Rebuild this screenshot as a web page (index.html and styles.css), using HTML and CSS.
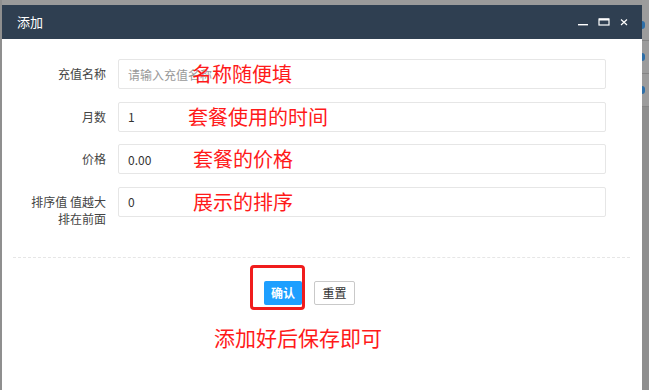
FILE: index.html
```html
<!DOCTYPE html>
<html>
<head>
  <meta charset="utf-8">
  <title>添加</title>
  <link rel="stylesheet" href="styles.css">
</head>
<body>
  <div class="page">
    <div class="side-left"></div>

    <!-- dialog -->
    <div class="layer">
      <div class="layer-title">
        <span class="title-text">添加</span>
        <div class="layer-btns">
          <svg class="ico-min" width="10" height="12" viewBox="0 0 10 12"><rect x="0" y="8" width="10" height="1.4" fill="#fff"/></svg>
          <svg class="ico-max" width="12" height="12" viewBox="0 0 12 12"><rect x="1" y="3" width="10" height="6" fill="none" stroke="#fff" stroke-width="1.2"/><rect x="1" y="2.5" width="10" height="2" fill="#fff"/></svg>
          <svg class="ico-close" width="8" height="12" viewBox="0 0 8 12"><path d="M1 3.5 L7 9 M7 3.5 L1 9" stroke="#fff" stroke-width="1.2"/></svg>
        </div>
      </div>

      <div class="layer-body">
        <form class="form">
          <div class="form-item">
            <label class="form-label">充值名称</label>
            <div class="input-block">
              <input class="input" placeholder="请输入充值名称">
              <span class="note note-1">名称随便填</span>
            </div>
          </div>
          <div class="form-item">
            <label class="form-label">月数</label>
            <div class="input-block">
              <input class="input" value="1">
              <span class="note note-2">套餐使用的时间</span>
            </div>
          </div>
          <div class="form-item">
            <label class="form-label">价格</label>
            <div class="input-block">
              <input class="input" value="0.00">
              <span class="note note-3">套餐的价格</span>
            </div>
          </div>
          <div class="form-item">
            <label class="form-label">排序值 值越大<br>排在前面</label>
            <div class="input-block">
              <input class="input" value="0">
              <span class="note note-3">展示的排序</span>
            </div>
          </div>
        </form>

        <div class="dash"></div>

        <div class="btn-row">
          <div class="btn-wrap">
            <button class="btn btn-blue" type="button">确认</button>
            <span class="mark"></span>
          </div>
          <button class="btn btn-plain" type="button">重置</button>
        </div>

        <p class="tip">添加好后保存即可</p>
      </div>
    </div>

    <!-- bits of the page behind the shade -->
    <div class="side-right">
      <div class="peek"><span class="dot"></span></div>
      <div class="peek"><span class="dot"></span></div>
      <div class="peek"><span class="dot"></span></div>
    </div>
  </div>
</body>
</html>
```
FILE: styles.css
```css
* {
  box-sizing: border-box;
  margin: 0;
  padding: 0;
}

body {
  background-color: #9a9a9a;
  font-family: "Noto Sans CJK SC", "Liberation Sans", sans-serif;
  width: 649px;
  height: 390px;
  overflow: hidden;
}

.page {
  display: flex;
  height: 390px;
}

.side-left {
  width: 2px;
  background-color: #8f8f8f;
}

/* dialog */
.layer {
  width: 640px;
  margin-top: 5px;
  background-color: #fff;
  display: flex;
  flex-direction: column;
}

.layer-title {
  height: 34px;
  background-color: #2f3f51;
  display: flex;
  align-items: center;
  justify-content: space-between;
  padding-left: 15px;
  padding-right: 14px;
}

.title-text {
  color: #fff;
  font-size: 13px;
  line-height: 16px;
}

.layer-btns {
  display: flex;
  align-items: center;
}

.ico-min { margin-right: 10px; }
.ico-max { margin-right: 10px; }

.layer-body {
  flex: 1;
}

/* form */
.form {
  padding-top: 20px;
  display: flex;
  flex-direction: column;
  gap: 12.5px;
}

.form-item {
  display: flex;
  align-items: flex-start;
  height: 30px;
}

.form-label {
  width: 116px;
  padding-right: 12px;
  padding-top: 6px;
  text-align: right;
  font-size: 12px;
  line-height: 17px;
  color: #444;
}

.input-block {
  position: relative;
  width: 488px;
}

.input {
  width: 100%;
  height: 30px;
  border: 1px solid #e6e6e6;
  border-radius: 2px;
  padding-left: 9px;
  font-family: "Noto Sans CJK SC", "Liberation Sans", sans-serif;
  font-size: 12px;
  color: #333;
  outline: none;
}

.input::placeholder {
  color: #999;
}

/* red notes drawn over the inputs */
.note {
  position: absolute;
  top: 0;
  height: 30px;
  display: flex;
  align-items: center;
  color: #ff1a1a;
  font-size: 20px;
  line-height: 20px;
  pointer-events: none;
}

.note-1 { left: 74px; }
.note-2 { left: 70px; }
.note-3 { left: 75px; }

.dash {
  margin: 40px 12px 0 11px;
  border-top: 1px dashed #e6e6e6;
}

.btn-row {
  display: flex;
  gap: 12px;
  padding-left: 262px;
  margin-top: 23px;
}

.btn-wrap {
  position: relative;
  display: flex;
}

.btn {
  height: 24px;
  font-family: "Noto Sans CJK SC", "Liberation Sans", sans-serif;
  font-size: 12px;
  border-radius: 2px;
  cursor: pointer;
}

.btn-blue {
  width: 38px;
  border: none;
  background-color: #1e9fff;
  color: #fff;
  font-weight: bold;
}

.btn-plain {
  width: 41px;
  border: 1px solid #c9c9c9;
  background-color: #fff;
  color: #333;
}

.mark {
  position: absolute;
  left: -14px;
  top: -16px;
  width: 55px;
  height: 45px;
  border: 3px solid #f01c1c;
  border-radius: 4px;
}

.tip {
  margin-top: 20px;
  padding-left: 212px;
  color: #ff1a1a;
  font-size: 21px;
  line-height: 24px;
}

/* page behind */
.side-right {
  width: 7px;
  background-color: #8e8e8e;
  display: flex;
  flex-direction: column;
}

.peek {
  height: 33px;
  border-bottom: 1px solid #858585;
  background-color: #9c9c9c;
  display: flex;
  align-items: center;
}

.peek:first-child {
  height: 41px;
  padding-top: 10px;
}

.dot {
  width: 3px;
  height: 8px;
  border-radius: 0 4px 4px 0;
  background-color: #2e6fa8;
}
```
